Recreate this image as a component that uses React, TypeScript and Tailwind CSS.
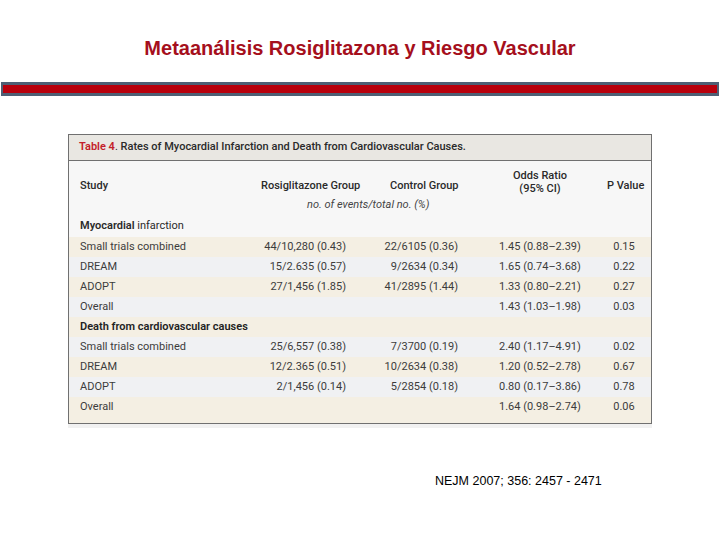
import React from "react";

type Row = {
  study: string;
  rosi?: string;
  control?: string;
  odds?: string;
  p?: string;
  bold?: boolean;
};

const rows: Row[] = [
  { study: "Small trials combined", rosi: "44/10,280 (0.43)", control: "22/6105 (0.36)", odds: "1.45 (0.88–2.39)", p: "0.15" },
  { study: "DREAM", rosi: "15/2.635 (0.57)", control: "9/2634 (0.34)", odds: "1.65 (0.74–3.68)", p: "0.22" },
  { study: "ADOPT", rosi: "27/1,456 (1.85)", control: "41/2895 (1.44)", odds: "1.33 (0.80–2.21)", p: "0.27" },
  { study: "Overall", odds: "1.43 (1.03–1.98)", p: "0.03" },
  { study: "Death from cardiovascular causes", bold: true },
  { study: "Small trials combined", rosi: "25/6,557 (0.38)", control: "7/3700 (0.19)", odds: "2.40 (1.17–4.91)", p: "0.02" },
  { study: "DREAM", rosi: "12/2.365 (0.51)", control: "10/2634 (0.38)", odds: "1.20 (0.52–2.78)", p: "0.67" },
  { study: "ADOPT", rosi: "2/1,456 (0.14)", control: "5/2854 (0.18)", odds: "0.80 (0.17–3.86)", p: "0.78" },
  { study: "Overall", odds: "1.64 (0.98–2.74)", p: "0.06" },
];

function DataRow({ row, index }: { row: Row; index: number }) {
  const beige = index % 2 === 0;
  const last = index === rows.length - 1;
  return (
    <div
      className={`flex items-center pl-[11px] ${last ? "h-[26px] pb-[6px]" : "h-[20px]"} ${
        beige ? "bg-[#f4efe3]" : "bg-[#f0f1f3]"
      }`}
    >
      <div className={`w-[170px] whitespace-nowrap ${row.bold ? "font-semibold text-[#222]" : ""}`}>{row.study}</div>
      <div className="w-[96px] text-right whitespace-nowrap">{row.rosi}</div>
      <div className="w-[112px] text-right whitespace-nowrap">{row.control}</div>
      <div className="w-[141px] pl-[41px] whitespace-nowrap">{row.odds}</div>
      <div className="w-[50px] text-center">{row.p}</div>
    </div>
  );
}

export default function App() {
  return (
    <div className="w-[720px] h-[540px] bg-white overflow-hidden">
      <h1
        className="pt-[36px] h-[82px] text-center text-[20px] font-bold text-[#a50f1c] leading-[24px]"
        style={{ fontFamily: '"Liberation Sans", Arial, sans-serif' }}
      >
        Metaanálisis Rosiglitazona y Riesgo Vascular
      </h1>

      <div className="mx-[1px] h-[14px] bg-[#4e5f74] px-[2px] py-[3px]">
        <div className="h-full bg-[#b8000c]" />
      </div>

      <div
        className="ml-[68px] mt-[38px] w-[584px] border border-[#707070] shadow-[0_4px_0_#f1f1f1] text-[11px] text-[#3c3c3c]"
        style={{ fontFamily: "Roboto, 'Liberation Sans', sans-serif" }}
      >
        <div className="flex h-[26px] items-center border-b border-[#707070] bg-[#e9e7e2] pl-[10px] text-[#2a2a2a]">
          <span className="font-semibold text-[#c3202a]">Table 4</span>
          <span>.&nbsp;</span>
          <span className="font-medium">Rates of Myocardial Infarction and Death from Cardiovascular Causes.</span>
        </div>

        <div className="bg-[#f7f7f7]">
          <div className="flex items-end pl-[11px] pt-[7px] h-[34px] text-[#2a2a2a] font-medium">
            <div className="w-[181px] pb-[1px]">Study</div>
            <div className="w-[97px] pb-[1px] whitespace-nowrap">Rosiglitazone Group</div>
            <div className="ml-[32px] w-[70px] pb-[1px] whitespace-nowrap">Control Group</div>
            <div className="ml-[30px] w-[100px] text-center leading-[13px]">
              Odds Ratio
              <br />
              (95% CI)
            </div>
            <div className="ml-[17px] pb-[1px] whitespace-nowrap">P Value</div>
          </div>
          <div className="h-[20px] flex items-center pl-[238px] italic text-[#444]">no. of events/total no. (%)</div>
          <div className="h-[22px] flex items-center pl-[11px] text-[#2a2a2a]">
            <span className="font-semibold">Myocardial</span>&nbsp;infarction
          </div>
        </div>

        {rows.map((row, i) => (
          <DataRow key={i} row={row} index={i} />
        ))}
      </div>

      <div
        className="mt-[48px] pl-[435px] text-[12.5px] text-black"
        style={{ fontFamily: '"Liberation Sans", Arial, sans-serif' }}
      >
        NEJM 2007; 356: 2457 - 2471
      </div>
    </div>
  );
}
